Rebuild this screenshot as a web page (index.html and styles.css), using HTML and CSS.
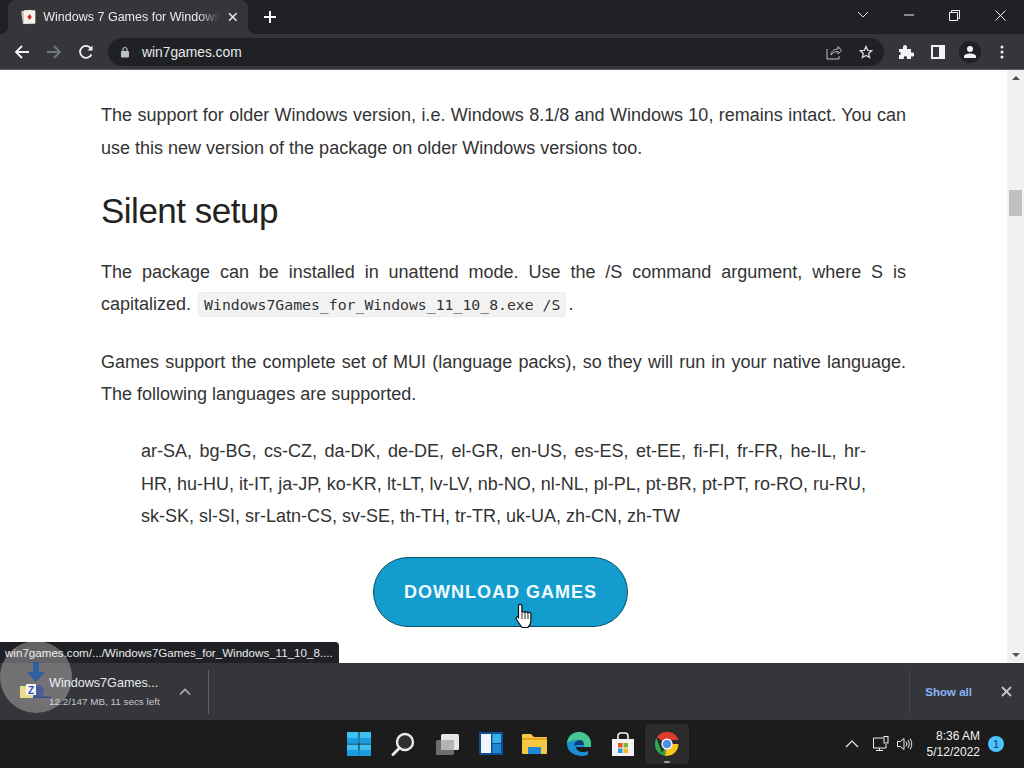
FILE: index.html
```html
<!DOCTYPE html>
<html lang="en">
<head>
    <meta charset="UTF-8">
    <title>Windows 7 Games for Windows 11</title>
    <link rel="stylesheet" href="styles.css">
</head>
<body>
    <div class="tabstrip">
        <div class="tab">
            <svg class="favicon" width="16" height="16" viewBox="0 0 16 16">
                <rect x="1" y="1" width="11" height="14" rx="1" fill="#c9c4b4" transform="rotate(-8 6 8)"/>
                <rect x="3" y="1" width="12" height="14" rx="1" fill="#f4f2ea"/>
                <path d="M9 5l2.400 3L9 11 6.600 8z" fill="#d3202c"/>
            </svg>
            <span class="tab-title">Windows 7 Games for Windows</span>
            <svg class="tab-close" width="10" height="10" viewBox="0 0 10 10"><path d="M1 1l8 8M9 1l-8 8" stroke="#e8eaed" stroke-width="1.600"/></svg>
        </div>
        <svg class="new-tab" width="14" height="14" viewBox="0 0 14 14"><path d="M7 1v12M1 7h12" stroke="#fff" stroke-width="2"/></svg>
        <div class="window-btns">
            <svg width="12" height="8" viewBox="0 0 12 8"><path d="M1 1l5 5 5-5" fill="none" stroke="#dcdee0" stroke-width="1"/></svg>
            <svg width="10" height="2" viewBox="0 0 10 2"><path d="M0 1h10" stroke="#f1f3f4" stroke-width="1"/></svg>
            <svg width="11" height="11" viewBox="0 0 11 11"><path d="M.5 2.500h8v8h-8zM2.500 2.500v-2h8v8h-2" fill="none" stroke="#f1f3f4" stroke-width="1"/></svg>
            <svg width="11" height="11" viewBox="0 0 11 11"><path d="M.5.500l10 10M10.500.500l-10 10" stroke="#f1f3f4" stroke-width="1"/></svg>
        </div>
    </div>

    <div class="toolbar">
        <svg class="nav-icon" width="16" height="16" viewBox="0 0 16 16"><path d="M15 8H2M8 2L2 8l6 6" fill="none" stroke="#f1f3f4" stroke-width="1.800"/></svg>
        <svg class="nav-icon" width="16" height="16" viewBox="0 0 16 16"><path d="M1 8h13M8 2l6 6-6 6" fill="none" stroke="#74787c" stroke-width="1.800"/></svg>
        <svg class="nav-icon" width="16" height="16" viewBox="0 0 16 16"><path d="M13.500 10.500A6 6 0 1 1 13 4.500" fill="none" stroke="#f1f3f4" stroke-width="1.800"/><path d="M14.500 1.500v5h-5z" fill="#f1f3f4"/></svg>
        <div class="omnibox">
            <svg width="10" height="12" viewBox="0 0 10 12"><rect x="1" y="5" width="8" height="6.500" rx="1" fill="#bdc1c6"/><path d="M3 5V3.500a2 2 0 0 1 4 0V5" fill="none" stroke="#bdc1c6" stroke-width="1.200"/></svg>
            <span class="url">win7games.com</span>
            <svg class="omni-share" width="16" height="16" viewBox="0 0 16 16"><path d="M1 5v10h12v-3M5 11c.5-4 3-6 7-6V2.500L15.500 6.500 12 10V7.500c-3 0-5 1-7 3.500z" fill="none" stroke="#bdc1c6" stroke-width="1"/></svg>
            <svg width="16" height="16" viewBox="0 0 16 16"><path d="M8 2.500l1.700 3.800 4 .4-3 2.700.9 4L8 11.400l-3.600 2 .9-4-3-2.700 4-.4z" fill="none" stroke="#d5d7d9" stroke-width="1.300"/></svg>
        </div>
        <div class="toolbar-right">
            <svg width="16" height="16" viewBox="0 0 16 16"><path d="M1 5h4V3a2 2 0 0 1 4 0v2h4v3.500h1.500a2 2 0 0 1 0 4H13V15H9v-1.500a1.600 1.600 0 0 0-3.200 0V15H1v-4h1a2 2 0 0 0 0-3H1z" fill="#f1f3f4"/></svg>
            <svg width="14" height="14" viewBox="0 0 14 14"><rect x="1" y="1" width="12" height="12" fill="none" stroke="#f1f3f4" stroke-width="2"/><rect x="8" y="1" width="5" height="12" fill="#f1f3f4"/></svg>
            <span class="avatar">
                <svg width="14" height="14" viewBox="0 0 14 14"><circle cx="7" cy="4" r="3" fill="#f1f3f4"/><path d="M1 13v-1.500C1 9.500 4 8.500 7 8.500s6 1 6 3V13z" fill="#f1f3f4"/></svg>
            </span>
            <svg width="4" height="14" viewBox="0 0 4 14"><circle cx="2" cy="2" r="1.500" fill="#f1f3f4"/><circle cx="2" cy="7" r="1.500" fill="#f1f3f4"/><circle cx="2" cy="12" r="1.500" fill="#f1f3f4"/></svg>
        </div>
    </div>

    <div class="viewport">
        <div class="page">
            <p>The support for older Windows version, i.e. Windows 8.1/8 and Windows 10, remains intact. You can use this new version of the package on older Windows versions too.</p>
            <h2>Silent setup</h2>
            <p class="setup">The package can be installed in unattend mode. Use the /S command argument, where S is capitalized. <code>Windows7Games_for_Windows_11_10_8.exe /S</code> .</p>
            <p>Games support the complete set of MUI (language packs), so they will run in your native language. The following languages are supported.</p>
            <blockquote>ar-SA, bg-BG, cs-CZ, da-DK, de-DE, el-GR, en-US, es-ES, et-EE, fi-FI, fr-FR, he-IL, hr-HR, hu-HU, it-IT, ja-JP, ko-KR, lt-LT, lv-LV, nb-NO, nl-NL, pl-PL, pt-BR, pt-PT, ro-RO, ru-RU, sk-SK, sl-SI, sr-Latn-CS, sv-SE, th-TH, tr-TR, uk-UA, zh-CN, zh-TW</blockquote>
            <div class="download-wrap"><a class="download-btn">DOWNLOAD GAMES</a></div>
        </div>
        <div class="scrollbar">
            <span class="arrow-up"></span>
            <div class="track"><div class="thumb"></div></div>
            <span class="arrow-down"></span>
        </div>
        <svg class="cursor" width="18" height="26" viewBox="0 0 18 26"><path d="M3.500 3a1.700 1.700 0 0 1 3.400 0v6.500a1.600 1.600 0 0 1 3 .3 1.600 1.600 0 0 1 3 .4 1.600 1.600 0 0 1 3 .8V18c0 3-1.500 5-3 6.500H7c-1.500-2-3.500-5-5.500-8-1-1.500 0-3 1.500-2.500l.5.500z" fill="#fff" stroke="#111" stroke-width="1.200"/><path d="M7 10v6M10 11v5M13 11.500V16" stroke="#111" stroke-width=".9"/></svg>
        <div class="status-bubble">win7games.com/.../Windows7Games_for_Windows_11_10_8....</div>
    </div>

    <div class="download-bar">
        <div class="dl-item">
            <svg class="zip-icon" width="16" height="14" viewBox="0 0 16 14"><rect x="0" y="2" width="13" height="12" fill="#e8dc8e"/><rect x="6" y="0" width="10" height="11" fill="#f4f4f4"/><text x="8" y="9.500" class="zip-letter">Z</text></svg>
            <div class="dl-text">
                <div class="dl-name">Windows7Games...</div>
                <div class="dl-size">12.2/147 MB, 11 secs left</div>
            </div>
            <svg class="dl-chevron" width="12" height="8" viewBox="0 0 12 8"><path d="M1 6.500l5-5 5 5" fill="none" stroke="#aeb1b4" stroke-width="1.600"/></svg>
        </div>
        <div class="dl-right">
            <a class="show-all">Show all</a>
            <svg width="11" height="11" viewBox="0 0 11 11"><path d="M1 1l9 9M10 1l-9 9" stroke="#c4c7ca" stroke-width="1.800"/></svg>
        </div>
        <div class="click-ring">
            <svg width="30" height="37" viewBox="0 0 30 37"><path d="M12 0h6v10h6L15 20 6 10h6z" fill="#2f5f9f"/><circle cx="17" cy="29" r="6" fill="#4a5f9a"/><path d="M0 34.500h30V36H0z" fill="#2f4f8f"/></svg>
        </div>
    </div>

    <div class="taskbar">
        <div></div>
        <div class="task-icons">
            <span class="task-icon">
                <svg width="24" height="24" viewBox="0 0 24 24"><path d="M0 0h11.500v11.500H0zM12.500 0H24v11.500H12.500zM0 12.500h11.500V24H0zM12.500 12.500H24V24H12.500z" fill="#3cc1f2"/><path d="M0 6h11.500v5.500H0zM12.500 6H24v5.500H12.500zM0 18h11.500v6H0zM12.500 18H24v6H12.500z" fill="#1a9ce0"/></svg>
            </span>
            <span class="task-icon">
                <svg width="24" height="24" viewBox="0 0 24 24"><circle cx="14" cy="10" r="8" fill="#2e2e2e" stroke="#e8e8e8" stroke-width="2.400"/><path d="M8.500 16L2 22.500" stroke="#e8e8e8" stroke-width="3" stroke-linecap="round"/></svg>
            </span>
            <span class="task-icon">
                <svg width="24" height="24" viewBox="0 0 24 24"><rect x="6" y="2" width="18" height="16" rx="1.500" fill="#e6e6e6"/><rect x="1" y="8" width="18" height="15" rx="1.500" fill="#6e6e6e"/><rect x="6" y="8" width="13" height="10" fill="#b4b4b4"/></svg>
            </span>
            <span class="task-icon">
                <svg width="24" height="24" viewBox="0 0 24 24"><rect width="24" height="23" y="0" rx="1" fill="#0f4f97"/><rect x="2" y="2" width="10" height="19" fill="#f2f6fb"/><rect x="13.500" y="2" width="8.500" height="9" fill="#35b2ea"/><rect x="13.500" y="12" width="8.500" height="9" fill="#1f86cf"/></svg>
            </span>
            <span class="task-icon">
                <svg width="25" height="24" viewBox="0 0 25 24"><path d="M0 3a1 1 0 0 1 1-1h8l3 3h12a1 1 0 0 1 1 1v15a1 1 0 0 1-1 1H1a1 1 0 0 1-1-1z" fill="#f7c843"/><path d="M0 6h25v2H0z" fill="#e6a91e"/><path d="M7 15h11a1 1 0 0 1 1 1v6H6v-6a1 1 0 0 1 1-1z" fill="#1f88d6"/></svg>
            </span>
            <span class="task-icon">
                <svg width="24" height="24" viewBox="0 0 24 24"><path d="M12 0a12 12 0 0 1 12 12v3H9c.5 3 3 5 7 5 2.500 0 4-.5 5-1v3.500c-2 1-4 1.500-6 1.500C8 24 0 20 0 12 0 5 5 0 12 0z" fill="#1b8fd3"/><path d="M0 11C1 4 6 0 12 0a12 12 0 0 1 12 12v3h-7c1-3 0-7-5-7-5 0-9 1-12 3z" fill="#45c88d"/><path d="M7 14c0-3 2-6 6-6 3 0 4 2.500 4 5H10c-.5 0-3 1-3 1z" fill="#123f7a"/></svg>
            </span>
            <span class="task-icon">
                <svg width="24" height="24" viewBox="0 0 24 24"><path d="M1 7h22v17H1z" fill="#f2f2f2"/><path d="M7 7V4a3 3 0 0 1 3-3h4a3 3 0 0 1 3 3v3" fill="none" stroke="#f2f2f2" stroke-width="1.600"/><rect x="7" y="11" width="4.500" height="4.500" fill="#e8502a"/><rect x="12.500" y="11" width="4.500" height="4.500" fill="#7db82e"/><rect x="7" y="16.500" width="4.500" height="4.500" fill="#1d9fe0"/><rect x="12.500" y="16.500" width="4.500" height="4.500" fill="#f5b91d"/></svg>
            </span>
            <span class="task-icon active">
                <svg width="24" height="24" viewBox="0 0 24 24"><path d="M12 12L2 5.500A12 12 0 0 1 23.500 8H12z" fill="#e0392e"/><path d="M12 12l-5 9L1.500 6A12 12 0 0 0 10 23.800z" fill="#2ba84a"/><path d="M12 12h11.500A12 12 0 0 1 10 23.800z" fill="#f9c51c"/><circle cx="12" cy="12" r="5.600" fill="#fff"/><circle cx="12" cy="12" r="4.300" fill="#4a90e2"/></svg>
                <i class="running"></i>
            </span>
        </div>
        <div class="tray">
            <svg width="14" height="8" viewBox="0 0 14 8"><path d="M1 7l6-6 6 6" fill="none" stroke="#eee" stroke-width="1.200"/></svg>
            <svg class="tray-net" width="16" height="16" viewBox="0 0 16 16"><path d="M10 2H.5v10h12.500V8M3 14.500h7M6.500 12v2.500" fill="none" stroke="#eee" stroke-width="1"/><rect x="11" y=".5" width="4" height="6.500" fill="none" stroke="#eee" stroke-width="1"/></svg>
            <svg width="16" height="16" viewBox="0 0 16 16"><path d="M.5 5.500h3L7 2.500v11l-3.500-3h-3zM9 5.500c1 1.500 1 3.500 0 5M11 4c1.600 2.500 1.600 5.500 0 8M13 2.500c2.300 3.500 2.300 7.500 0 11" fill="none" stroke="#eee" stroke-width="1"/></svg>
            <div class="clock"><div>8:36 AM</div><div>5/12/2022</div></div>
            <span class="badge">1</span>
        </div>
    </div>
</body>
</html>
```

FILE: styles.css
```css
html, body {
    margin: 0;
    padding: 0;
    height: 100%;
    overflow: hidden;
}
body {
    display: flex;
    flex-direction: column;
    width: 1024px;
    height: 768px;
    font-family: "Liberation Sans", Arial, sans-serif;
    background: #fff;
}

/* tab strip */
.tabstrip {
    height: 34px;
    flex: none;
    display: flex;
    align-items: flex-end;
    background: #202124;
    padding-left: 8px;
}
.tab {
    width: 240px;
    height: 34px;
    box-sizing: border-box;
    position: relative;
    display: flex;
    align-items: center;
    padding: 0 10px 0 13px;
    background: #35363a;
    border-radius: 8px 8px 0 0;
}
.tab::before, .tab::after {
    content: "";
    position: absolute;
    bottom: 0;
    width: 8px;
    height: 8px;
}
.tab::before {
    left: -8px;
    background: radial-gradient(circle at 0 0, #202124 8px, #35363a 8.500px);
}
.tab::after {
    right: -8px;
    background: radial-gradient(circle at 100% 0, #202124 8px, #35363a 8.500px);
}
.tab-title {
    flex: 1;
    margin-left: 7px;
    font-size: 12.500px;
    color: #e8eaed;
    white-space: nowrap;
    -webkit-mask-image: linear-gradient(to right, #000 88%, transparent);
    mask-image: linear-gradient(to right, #000 88%, transparent);
}
.tab-close {
    margin-left: 8px;
}
.new-tab {
    margin: 0 0 10px 15px;
}
.window-btns {
    margin-left: auto;
    height: 34px;
    display: flex;
    align-items: center;
    gap: 35px;
    padding: 0 18px 4px 0;
    box-sizing: border-box;
}

/* toolbar */
.toolbar {
    height: 36px;
    flex: none;
    display: flex;
    align-items: center;
    padding: 0 14px 0 14px;
    box-sizing: border-box;
    background: #35363a;
    border-bottom: 1px solid #5f6062;
}
.nav-icon {
    margin-right: 16px;
}
.omnibox {
    width: 776px;
    height: 28px;
    margin-left: -2px;
    box-sizing: border-box;
    display: flex;
    align-items: center;
    gap: 16px;
    padding: 0 10px 0 12px;
    border-radius: 14px;
    background: #202124;
}
.url {
    flex: 1;
    margin-left: -4px;
    padding-top: 1px;
    font-size: 13.800px;
    color: #e8eaed;
}
.toolbar-right {
    margin-left: 14px;
    display: flex;
    align-items: center;
    gap: 17px;
}
.avatar {
    width: 22px;
    height: 22px;
    margin: 0 2px 0 -3px;
    display: flex;
    align-items: center;
    justify-content: center;
    border-radius: 50%;
    background: #202124;
}

/* page */
.viewport {
    flex: 1;
    min-height: 0;
    display: flex;
    position: relative;
    background: #fff;
}
.page {
    flex: 1;
    padding: 29.400px 101px 0 101px;
    overflow: hidden;
    font-size: 18px;
    line-height: 32.400px;
    color: #333;
}
.page p {
    margin: 0 0 25px;
    text-align: justify;
}
.page p.setup {
    margin-bottom: 24px;
}
.page h2 {
    margin: 26.600px 0 25px;
    font-size: 35px;
    line-height: 40px;
    font-weight: 400;
    letter-spacing: -.5px;
    color: #222;
}
.page code {
    margin: 0 -3px 0 2px;
    padding: 3px 5px;
    font-family: "DejaVu Sans Mono", monospace;
    font-size: 14.800px;
    background: #f3f3f3;
    border: 1px solid #ececec;
    border-radius: 4px;
}
.page blockquote {
    margin: 0 40px 24px;
    text-align: justify;
}
.download-wrap {
    display: flex;
    justify-content: center;
    padding-right: 6px;
}
.download-btn {
    width: 255px;
    height: 70px;
    box-sizing: border-box;
    display: flex;
    align-items: center;
    justify-content: center;
    padding-top: 2px;
    border: 1px solid #0b4f5f;
    border-radius: 35px;
    background: #129dce;
    color: #f2fbff;
    font-size: 18px;
    font-weight: 700;
    letter-spacing: 1px;
}
.scrollbar {
    width: 17px;
    flex: none;
    display: flex;
    flex-direction: column;
    align-items: center;
    background: #f1f1f1;
}
.track {
    flex: 1;
    width: 100%;
    display: flex;
    justify-content: center;
}
.thumb {
    width: 13px;
    height: 26px;
    margin-top: 104px;
    background: #c1c1c1;
}
.arrow-up, .arrow-down {
    width: 0;
    height: 0;
    margin: 6px 0;
    border-left: 4px solid transparent;
    border-right: 4px solid transparent;
}
.arrow-up {
    border-bottom: 4px solid #505050;
}
.arrow-down {
    border-top: 4px solid #505050;
}
.status-bubble {
    position: absolute;
    left: 0;
    bottom: 0;
    height: 21px;
    padding: 0 6px 0 5px;
    line-height: 22px;
    font-size: 11.600px;
    color: #e8eaed;
    background: #202124;
    border-radius: 0 4px 0 0;
    white-space: nowrap;
}
.cursor {
    position: absolute;
    left: 515px;
    top: 533px;
}

/* download shelf */
.download-bar {
    height: 57px;
    flex: none;
    position: relative;
    display: flex;
    align-items: center;
    justify-content: space-between;
    background: #35363a;
}
.dl-item {
    width: 209px;
    height: 44px;
    box-sizing: border-box;
    display: flex;
    align-items: center;
    padding-left: 20px;
    border-right: 1px solid #5f6368;
}
.zip-icon {
    flex: none;
    position: relative;
    z-index: 1;
    margin-right: 13px;
    margin-bottom: 2px;
}
.zip-letter {
    font-size: 10px;
    font-weight: 700;
    fill: #3a4fb0;
}
.dl-text {
    white-space: nowrap;
}
.dl-name {
    font-size: 12.600px;
    line-height: 20px;
    color: #e8eaed;
}
.dl-size {
    font-size: 9.900px;
    line-height: 17px;
    color: #c5c8cb;
}
.dl-chevron {
    margin-left: 19px;
}
.dl-right {
    height: 44px;
    display: flex;
    align-items: center;
    gap: 29px;
    padding: 0 12px 0 15px;
    border-left: 1px solid #44464a;
}
.show-all {
    font-size: 11.500px;
    font-weight: 700;
    color: #8ab4f8;
}
.click-ring {
    position: absolute;
    left: 0;
    top: -22px;
    width: 72px;
    height: 72px;
    display: flex;
    justify-content: center;
    padding-top: 21px;
    box-sizing: border-box;
    border-radius: 50%;
    background: rgba(255, 255, 255, .3);
}

/* windows taskbar */
.taskbar {
    height: 48px;
    flex: none;
    display: grid;
    grid-template-columns: 1fr auto 1fr;
    align-items: center;
    background: #1c1c1c;
}
.task-icons {
    display: flex;
    align-items: center;
    padding-left: 1px;
}
.task-icon {
    width: 44px;
    height: 40px;
    position: relative;
    display: flex;
    align-items: center;
    justify-content: center;
}
.task-icon.active {
    background: #2b2b2b;
    border-radius: 4px;
}
.running {
    position: absolute;
    left: 19px;
    bottom: 1px;
    width: 6px;
    height: 2px;
    border-radius: 1px;
    background: #9a9a9a;
}
.tray {
    display: flex;
    align-items: center;
    justify-content: flex-end;
    padding-right: 20px;
    color: #f2f2f2;
}
.tray-net {
    margin: 0 8px 0 14px;
}
.clock {
    margin-left: 14px;
    font-size: 12px;
    line-height: 16px;
    text-align: right;
}
.badge {
    width: 16px;
    height: 16px;
    margin-left: 8px;
    border-radius: 50%;
    background: #4cc2ff;
    color: #10354a;
    font-size: 11px;
    line-height: 16px;
    text-align: center;
}
```
